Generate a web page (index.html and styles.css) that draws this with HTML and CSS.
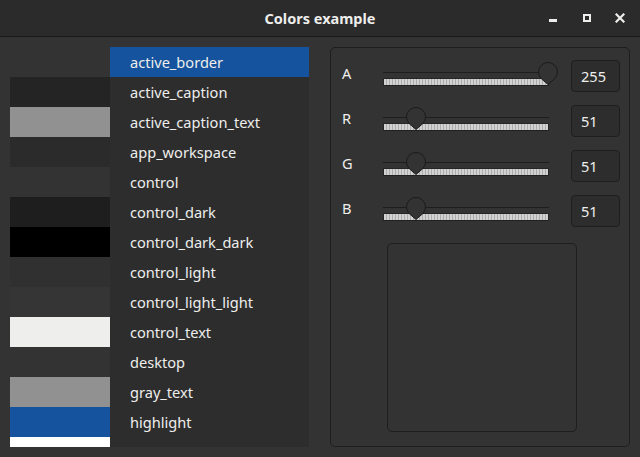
FILE: index.html
```html
<!DOCTYPE html>
<html>
<head>
<meta charset="utf-8">
<link rel="stylesheet" href="styles.css">
</head>
<body>
<div class="window">
  <header class="titlebar">
    <div class="title">Colors example</div>
    <div class="controls">
      <span class="btn-min"></span>
      <span class="btn-max"></span>
      <svg class="btn-close" width="10" height="10" viewBox="0 0 10 10"><path d="M1.5 1.5 L8.5 8.5 M8.5 1.5 L1.5 8.5" stroke="#eeeeec" stroke-width="2.2" stroke-linecap="square"/></svg>
    </div>
  </header>
  <main class="content">
    <section class="listpane">
      <div class="row"><span class="swatch" style="background:#333333"></span><span class="name selected">active_border</span></div>
      <div class="row"><span class="swatch" style="background:#242424"></span><span class="name">active_caption</span></div>
      <div class="row"><span class="swatch" style="background:#919191"></span><span class="name">active_caption_text</span></div>
      <div class="row"><span class="swatch" style="background:#2b2b2b"></span><span class="name">app_workspace</span></div>
      <div class="row"><span class="swatch" style="background:#333333"></span><span class="name">control</span></div>
      <div class="row"><span class="swatch" style="background:#1e1e1e"></span><span class="name">control_dark</span></div>
      <div class="row"><span class="swatch" style="background:#000000"></span><span class="name">control_dark_dark</span></div>
      <div class="row"><span class="swatch" style="background:#303030"></span><span class="name">control_light</span></div>
      <div class="row"><span class="swatch" style="background:#353535"></span><span class="name">control_light_light</span></div>
      <div class="row"><span class="swatch" style="background:#eeeeec"></span><span class="name">control_text</span></div>
      <div class="row"><span class="swatch" style="background:#333333"></span><span class="name">desktop</span></div>
      <div class="row"><span class="swatch" style="background:#919191"></span><span class="name">gray_text</span></div>
      <div class="row"><span class="swatch" style="background:#15539e"></span><span class="name">highlight</span></div>
      <div class="row"><span class="swatch" style="background:#ffffff"></span><span class="name">highlight_text</span></div>
    </section>
    <section class="group">
      <div class="channels">
        <div class="chan">
          <span class="label">A</span>
          <div class="slider">
            <div class="line"></div>
            <div class="track"></div>
            <svg class="handle" style="left:165px" width="22" height="26" viewBox="0 0 22 26"><path d="M11 23.5 L4.3 17.7 A9.5 9.5 0 1 1 17.7 17.7 Z" fill="#333333" stroke="#1b1b1b" stroke-width="1"/></svg>
          </div>
          <div class="value">255</div>
        </div>
        <div class="chan">
          <span class="label">R</span>
          <div class="slider">
            <div class="line"></div>
            <div class="track"></div>
            <svg class="handle" style="left:33px" width="22" height="26" viewBox="0 0 22 26"><path d="M11 23.5 L4.3 17.7 A9.5 9.5 0 1 1 17.7 17.7 Z" fill="#333333" stroke="#1b1b1b" stroke-width="1"/></svg>
          </div>
          <div class="value">51</div>
        </div>
        <div class="chan">
          <span class="label">G</span>
          <div class="slider">
            <div class="line"></div>
            <div class="track"></div>
            <svg class="handle" style="left:33px" width="22" height="26" viewBox="0 0 22 26"><path d="M11 23.5 L4.3 17.7 A9.5 9.5 0 1 1 17.7 17.7 Z" fill="#333333" stroke="#1b1b1b" stroke-width="1"/></svg>
          </div>
          <div class="value">51</div>
        </div>
        <div class="chan">
          <span class="label">B</span>
          <div class="slider">
            <div class="line"></div>
            <div class="track"></div>
            <svg class="handle" style="left:33px" width="22" height="26" viewBox="0 0 22 26"><path d="M11 23.5 L4.3 17.7 A9.5 9.5 0 1 1 17.7 17.7 Z" fill="#333333" stroke="#1b1b1b" stroke-width="1"/></svg>
          </div>
          <div class="value">51</div>
        </div>
      </div>
      <div class="preview"></div>
    </section>
  </main>
</div>
</body>
</html>
```

FILE: styles.css
```css
* { box-sizing: border-box; }
html, body { margin: 0; padding: 0; }
body {
  width: 640px;
  height: 457px;
  overflow: hidden;
  background: #333333;
  font-family: "Noto Sans", "DejaVu Sans", sans-serif;
  color: #eeeeec;
}
.window { display: flex; flex-direction: column; height: 457px; }
.titlebar {
  height: 37px;
  flex: none;
  background: #2b2b2b;
  border-bottom: 1px solid #1a1a1a;
  display: flex;
  align-items: center;
  justify-content: center;
  position: relative;
}
.title { font-weight: bold; font-size: 14.5px; color: #eeeeec; margin-top: -1px; }
.controls {
  position: absolute;
  right: 15px;
  top: 0;
  height: 36px;
  display: flex;
  align-items: center;
  gap: 0;
}
.btn-min { width: 8px; height: 3px; background: #eeeeec; margin-top: 5px; margin-right: 26px; }
.btn-max { width: 8px; height: 8px; border: 2px solid #eeeeec; margin-right: 24px; }
.btn-close { display: block; }

.content {
  flex: 1;
  display: flex;
  gap: 21px;
  padding: 10px;
  min-height: 0;
}
.listpane {
  width: 300px;
  height: 400px;
  overflow: hidden;
  display: flex;
  flex-direction: column;
}
.row { display: flex; height: 30px; flex: none; }
.swatch { width: 100px; flex: none; }
.name {
  flex: 1;
  background: #2d2d2d;
  padding-left: 20px;
  font-size: 14.6px;
  line-height: 30px;
  color: #eeeeec;
}
.name.selected { background: #15539e; }

.group {
  flex: 1;
  height: 400px;
  border: 1px solid #1e1e1e;
  border-radius: 5px;
  padding: 12px 9px 0 11px;
}
.channels { display: flex; flex-direction: column; gap: 13px; }
.chan { display: flex; height: 32px; align-items: flex-start; }
.label { width: 41px; font-size: 14.6px; line-height: 14px; margin-top: 6px; }
.slider { position: relative; width: 166px; height: 32px; }
.line { height: 1px; background: #1e1e1e; margin-top: 12px; }
.track {
  height: 8px;
  margin-top: 5px;
  border: 1px solid #262626;
  border-bottom-color: #202020;
  background: repeating-linear-gradient(90deg, #d2d2d2 0 2px, #acacac 2px 3px);
}
.handle { position: absolute; top: 1px; margin-left: -11px; }
.value {
  margin-left: 22px;
  width: 49px;
  height: 32px;
  background: #2d2d2d;
  border: 1px solid #1e1e1e;
  border-radius: 4px;
  font-size: 14.6px;
  line-height: 30px;
  padding-left: 9px;
  margin-top: 0;
}
.preview {
  margin: 16px 0 0 45px;
  width: 190px;
  height: 189px;
  border: 1px solid #1e1e1e;
  border-radius: 5px;
}
```
